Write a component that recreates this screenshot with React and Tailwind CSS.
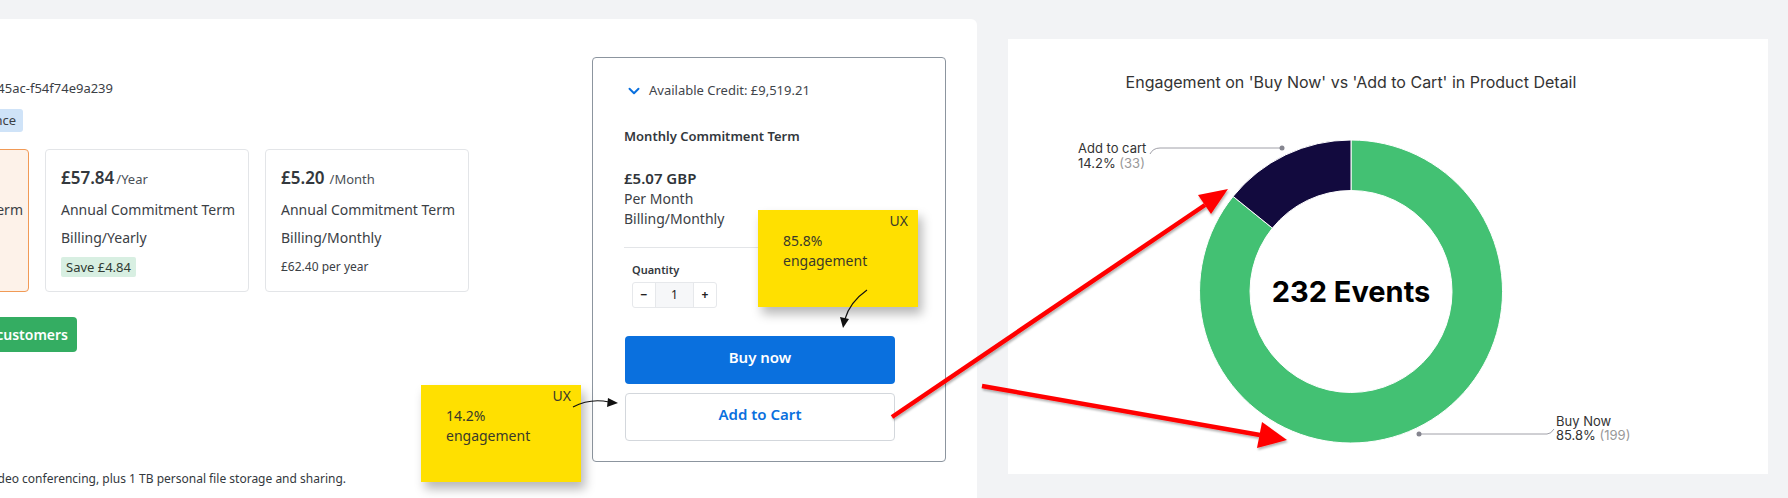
import React from "react";
import { ChevronDown } from "lucide-react";

function PlanCard({ selected, price, unit, unitGap, term, billing, children }) {
  return (
    <div
      className={
        selected
          ? "w-[204px] h-[143px] shrink-0 rounded-[4px] border border-[#f19a56] bg-[#fdf2e9] px-[15px] pt-[14px]"
          : "w-[204px] h-[143px] shrink-0 rounded-[4px] border border-[#e3e5e8] bg-white px-[15px] pt-[14px]"
      }
    >
      <div className="flex items-baseline h-[28px] leading-[28px]">
        <span className="text-[17px] font-semibold text-[#33383d]">{price}</span>
        <span className={unitGap ? "ml-[5px] text-[13px] text-[#4a5057]" : "ml-[2px] text-[13px] text-[#4a5057]"}>{unit}</span>
      </div>
      <div className="mt-[4px] text-[14px] leading-[28px] whitespace-nowrap">{term}</div>
      <div className="text-[14px] leading-[28px]">{billing}</div>
      {children}
    </div>
  );
}

function Sticky({ pct, className }) {
  return (
    <div className={"absolute w-[160px] h-[97px] bg-[#ffe000] shadow-[4px_7px_10px_rgba(0,0,0,0.28)] text-[14px] text-[#3a3a2a] font-['Noto_Sans',sans-serif] " + className}>
      <div className="mt-[1px] h-[20px] leading-[20px] text-right pr-[10px]">UX</div>
      <div className="pl-[25px] leading-[20px]">
        <div>{pct}</div>
        <div>engagement</div>
      </div>
    </div>
  );
}

function Donut() {
  return (
    <svg width="760" height="382" className="block">
      <path
        d="M 343 48 A 151.5 151.5 0 1 1 225.1 104.4 L 264.4 136.1 A 101 101 0 1 0 343 98.5 Z"
        fill="#43c173"
        stroke="#fff"
        strokeWidth="1"
      />
      <path
        d="M 343 48 A 151.5 151.5 0 0 0 225.1 104.4 L 264.4 136.1 A 101 101 0 0 1 343 98.5 Z"
        fill="#120a3e"
        stroke="#fff"
        strokeWidth="1"
      />
      <text x="343" y="210" textAnchor="middle" fontFamily="Inter, sans-serif" fontWeight="700" fontSize="29" fill="#000">
        232 Events
      </text>

      {/* add to cart label */}
      <path d="M 142 62 Q 145 56 152 56 L 274 56" fill="none" stroke="#a0a0a8" strokeWidth="1" />
      <circle cx="274" cy="56" r="2.5" fill="#85858f" />
      <text x="70" y="60.5" fontFamily="Inter, sans-serif" fontSize="13" fill="#333">Add to cart</text>
      <text x="70" y="75.5" fontFamily="Inter, sans-serif" fontSize="13" fill="#333">
        14.2% <tspan fill="#999">(33)</tspan>
      </text>

      {/* buy now label */}
      <path d="M 411 342 L 539 342 Q 543 342 546 337" fill="none" stroke="#a0a0a8" strokeWidth="1" />
      <circle cx="411" cy="342" r="2.5" fill="#85858f" />
      <text x="548" y="333.5" fontFamily="Inter, sans-serif" fontSize="13" fill="#333">Buy Now</text>
      <text x="548" y="347.5" fontFamily="Inter, sans-serif" fontSize="13" fill="#333">
        85.8% <tspan fill="#999">(199)</tspan>
      </text>
    </svg>
  );
}

function Annotations() {
  return (
    <svg width="1788" height="498" className="absolute left-0 top-0 pointer-events-none">
      <defs>
        <filter id="sh" x="-10%" y="-10%" width="120%" height="120%">
          <feDropShadow dx="1" dy="2" stdDeviation="1.2" floodColor="#000" floodOpacity="0.3" />
        </filter>
      </defs>
      <g filter="url(#sh)" fill="#ff0000" stroke="#ff0000">
        <line x1="892" y1="417" x2="1205" y2="205" strokeWidth="4.5" />
        <polygon points="1228,189 1211,214 1198,195" stroke="none" />
        <line x1="982" y1="386" x2="1260" y2="435" strokeWidth="4.5" />
        <polygon points="1287,440 1257,448 1262,422" stroke="none" />
      </g>
      {/* sticky arrows */}
      <path d="M 867 290 Q 850 302 845 319" fill="none" stroke="#111" strokeWidth="1.2" />
      <polygon points="843,328 840,317 849,319" fill="#111" />
      <path d="M 573 407 Q 590 398 609 402" fill="none" stroke="#111" strokeWidth="1.2" />
      <polygon points="618,403 608,398 607,407" fill="#111" />
    </svg>
  );
}

export default function App() {
  return (
    <div className="relative w-[1788px] h-[498px] overflow-hidden bg-[#f2f3f5] flex items-start font-['Noto_Sans','Open_Sans',sans-serif] text-[#3b4045]">
      {/* left product panel */}
      <div className="mt-[19px] w-[977px] h-[479px] shrink-0 bg-white rounded-tr-[6px] overflow-hidden flex items-start">
        <div className="-ml-[175px] w-[644px] shrink-0 flex flex-col">
          <div className="mt-[59px] w-[288px] flex justify-end text-[13px] leading-[20px] whitespace-nowrap">
            Subscription ID: 3fa1c2d9-8b7e-45ac-f54f74e9a239
          </div>
          <div className="mt-[11px] w-[198px] h-[23px] rounded-[3px] bg-[#cfe3f8] flex items-center justify-end pr-[7px] text-[13px] whitespace-nowrap">
            New Commerce Experience
          </div>
          <div className="mt-[17px] flex gap-4">
            <PlanCard selected price="£5.07" unit="/Month" unitGap term="Monthly Commitment Term" billing="Billing/Monthly" />
            <PlanCard price="£57.84" unit="/Year" term="Annual Commitment Term" billing="Billing/Yearly">
              <div className="mt-[5px] inline-block h-[20px] leading-[20px] px-[5px] rounded-[2px] bg-[#d8efe2] text-[13px] text-[#2f3a33]">
                Save £4.84
              </div>
            </PlanCard>
            <PlanCard price="£5.20" unit="/Month" unitGap term="Annual Commitment Term" billing="Billing/Monthly">
              <div className="mt-[5px] text-[12px] leading-[20px]">£62.40 per year</div>
            </PlanCard>
          </div>
          <div className="mt-[25px] w-[252px] h-[35px] rounded-[4px] bg-[#34ad62] flex items-center justify-end pr-[9px] text-[14px] font-semibold text-white whitespace-nowrap">
            Purchase for customers
          </div>
          <div className="mt-[117px] w-[521px] flex justify-end text-[12px] leading-[20px] text-[#33383d] whitespace-nowrap">
            Microsoft Teams chat, calls and video conferencing, plus 1 TB personal file storage and sharing.
          </div>
        </div>

        {/* purchase box */}
        <div className="ml-[123px] mt-[38px] w-[354px] h-[405px] shrink-0 rounded-[4px] border border-[#8c959f] pl-[31px] pr-[31px] flex flex-col">
          <div className="mt-[23px] h-[20px] flex items-center gap-[6px] pl-[1px] text-[13px] text-[#3f454b] whitespace-nowrap">
            <ChevronDown size={18} strokeWidth={2.6} className="text-[#0a70de]" />
            <span>Available Credit: £9,519.21</span>
          </div>
          <div className="mt-[25px] text-[13px] leading-[20px] font-semibold text-[#33383d]">Monthly Commitment Term</div>
          <div className="mt-[21px] text-[15px] leading-[22px] font-semibold text-[#2f3439]">£5.07 GBP</div>
          <div className="text-[14px] leading-[20px]">Per Month</div>
          <div className="text-[14px] leading-[20px]">Billing/Monthly</div>
          <div className="mt-[18px] border-t border-[#e3e5e8]" />
          <div className="mt-[14px] pl-[8px] text-[11px] leading-[16px] font-semibold text-[#33383d]">Quantity</div>
          <div className="ml-[8px] mt-[4px] flex h-[26px] w-[85px] rounded-[3px] border border-[#e6e8eb] text-[12px] text-[#222]">
            <div className="w-[22px] flex items-center justify-center font-bold">−</div>
            <div className="flex-1 bg-[#f6f7f9] border-x border-[#e6e8eb] flex items-center justify-center">1</div>
            <div className="w-[22px] flex items-center justify-center font-bold">+</div>
          </div>
          <button className="mt-[28px] ml-[1px] w-[270px] h-[48px] shrink-0 rounded-[4px] bg-[#0a70de] pb-[6px] text-white text-[15px] font-semibold">
            Buy now
          </button>
          <button className="mt-[9px] ml-[1px] w-[270px] h-[48px] shrink-0 rounded-[4px] border border-[#d3d7dc] bg-white pb-[5px] text-[#0a70de] text-[15px] font-semibold">
            Add to Cart
          </button>
        </div>
      </div>

      {/* chart card */}
      <div className="ml-[31px] mt-[39px] w-[760px] h-[435px] shrink-0 bg-white flex flex-col font-['Inter',sans-serif]">
        <div className="w-[686px] pt-[33px] text-center text-[16px] leading-[20px] text-[#333]">
          Engagement on 'Buy Now' vs 'Add to Cart' in Product Detail
        </div>
        <Donut />
      </div>

      <Sticky pct="85.8%" className="left-[758px] top-[210px]" />
      <Sticky pct="14.2%" className="left-[421px] top-[385px]" />
      <Annotations />
    </div>
  );
}
